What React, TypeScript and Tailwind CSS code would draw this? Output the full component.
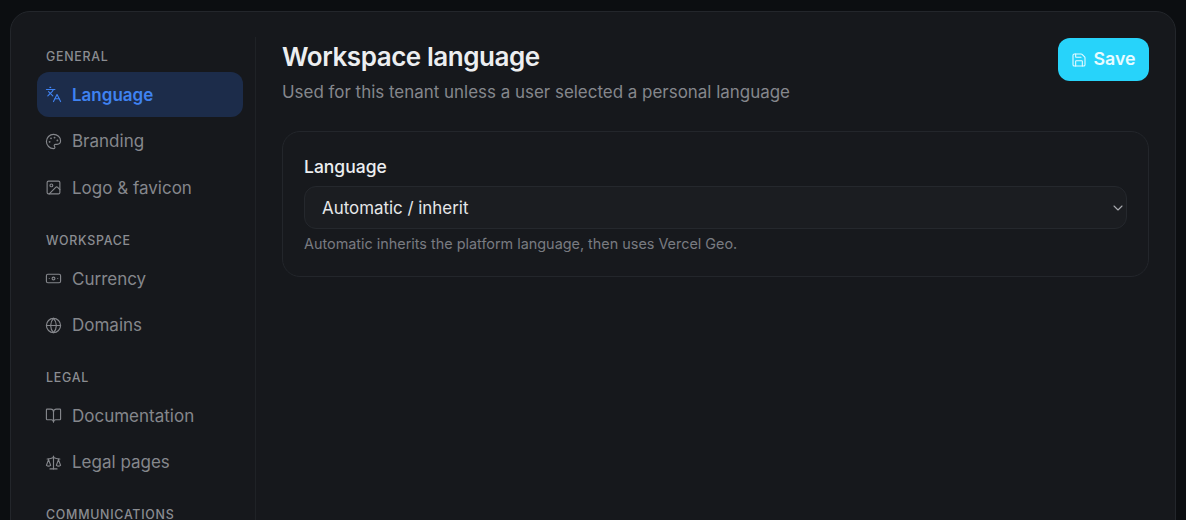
import { Languages, Palette, Image, Banknote, Globe, BookOpen, Scale, Save, ChevronDown } from "lucide-react";
import type { ComponentType } from "react";

type Item = { label: string; icon: ComponentType<{ className?: string; strokeWidth?: number }>; active?: boolean };

const groups: { title: string; cls: string; items: Item[] }[] = [
  { title: "GENERAL", cls: "", items: [
    { label: "Language", icon: Languages, active: true },
    { label: "Branding", icon: Palette },
    { label: "Logo & favicon", icon: Image },
  ] },
  { title: "WORKSPACE", cls: "mt-[11px]", items: [
    { label: "Currency", icon: Banknote },
    { label: "Domains", icon: Globe },
  ] },
  { title: "LEGAL", cls: "mt-[10.5px]", items: [
    { label: "Documentation", icon: BookOpen },
    { label: "Legal pages", icon: Scale },
  ] },
  { title: "COMMUNICATIONS", cls: "mt-[10.5px]", items: [] },
];

export default function App() {
  return (
    <div className="h-[520px] overflow-hidden bg-[#0c0e11] px-[10px] pt-[11px] font-['Inter',sans-serif]">
      <div className="flex h-[560px] rounded-[20px] border border-[#23262b] bg-[#16181c] pt-[25px] pr-[25px] pl-[26px]">
        <aside className="w-[219px] shrink-0 border-r border-[#1f2226] pr-[12px]">
          {groups.map((g) => (
            <div key={g.title} className={g.cls}>
              <div className="flex h-[35px] items-center pt-[7px] pb-[2px] pl-[9px] text-[12.4px] leading-none font-medium tracking-[0.06em] text-[#8b8d92]">
                {g.title}
              </div>
              <div className="flex flex-col gap-[1.5px]">
                {g.items.map((it) => {
                  const Icon = it.icon;
                  return (
                    <div
                      key={it.label}
                      className={
                        it.active
                          ? "flex h-[45px] items-center gap-[10px] rounded-[12px] bg-[#1c2c4a] pt-[2px] pl-[8px] text-[17px] font-semibold text-[#3f82f1]"
                          : "flex h-[45px] items-center gap-[10px] rounded-[12px] pt-[2px] pl-[8px] text-[17px] text-[#85878c]"
                      }
                    >
                      <Icon className="-mt-[2px] size-[17px] shrink-0" strokeWidth={1.6} />
                      <span>{it.label}</span>
                    </div>
                  );
                })}
              </div>
            </div>
          ))}
        </aside>
        <main className="min-w-0 flex-1 pr-[1px] pl-[26px]">
          <div className="flex items-start justify-between">
            <div>
              <h1 className="mt-[3px] text-[26px] leading-[34px] font-semibold tracking-[-0.017em] text-[#eceef0]">Workspace language</h1>
              <p className="mt-[6px] text-[16.95px] leading-[24px] text-[#85878c]">Used for this tenant unless a user selected a personal language</p>
            </div>
            <button className="mt-[1px] flex h-[43px] w-[91px] items-center justify-center gap-[6px] rounded-[12px] bg-[#27d3fa] text-[17.8px] font-semibold text-[#e8fbff]">
              <Save className="size-[16px]" strokeWidth={1.6} />
              Save
            </button>
          </div>
          <section className="mt-[27px] h-[146px] rounded-[18px] border border-[#23262b] bg-[#17191d] px-[21px] pt-[21px]">
            <label className="block text-[17.5px] leading-[28px] font-medium text-[#eceef0]">Language</label>
            <div className="mt-[5px] flex h-[43px] items-center justify-between rounded-[12px] border border-[#25282d] bg-[#1b1d21] pl-[17px] text-[16.9px] text-[#e6e7e9]">
              <span className="pt-[2px]">Automatic / inherit</span>
              <ChevronDown className="size-[16px] text-[#a9abb0]" strokeWidth={1.6} />
            </div>
            <p className="mt-[5px] text-[14.4px] leading-[20px] text-[#797b81]">Automatic inherits the platform language, then uses Vercel Geo.</p>
          </section>
        </main>
      </div>
    </div>
  );
}
